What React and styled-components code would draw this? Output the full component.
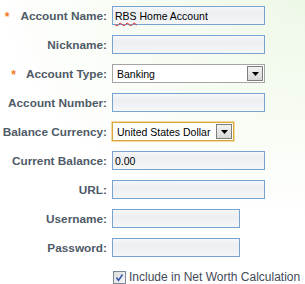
import React from 'react'
import styled, { createGlobalStyle } from 'styled-components'

const GlobalStyle = createGlobalStyle`
  html, body {
    margin: 0;
    padding: 0;
    background: #fff;
  }
  body {
    font-family: "Liberation Sans", Arial, sans-serif;
  }
`

const Page = styled.div`
  width: 305px;
  height: 284px;
  box-sizing: border-box;
  padding-top: 6px;
  background: radial-gradient(ellipse 120% 90% at 100% 0%, #eef8e7 0%, #f7fcf3 45%, #ffffff 85%);
  overflow: hidden;
`

const Form = styled.div`
  display: grid;
  grid-template-columns: 107px 1fr;
  column-gap: 5px;
  row-gap: 10px;
  align-items: center;
`

const Label = styled.div`
  display: flex;
  justify-content: flex-end;
  align-items: center;
  height: 19px;
  font-size: 11.8px;
  font-weight: bold;
  color: #4f5a67;
  white-space: nowrap;
`

const Required = styled.span`
  color: #f07c1c;
  font-size: 12px;
  font-weight: bold;
  margin-right: ${(p) => p.$gap}px;
  position: relative;
  top: 1px;
`

const TextBox = styled.div`
  box-sizing: border-box;
  width: ${(p) => p.$width}px;
  height: 19px;
  border: 1px solid #76a3cf;
  background: linear-gradient(to bottom, #f6f7f9 0%, #eceef2 35%, #f5f6f8 100%);
  font-size: 10.5px;
  color: #000;
  padding: 0 2px;
  display: flex;
  align-items: center;
  white-space: nowrap;
`

const Misspelled = styled.span`
  text-decoration: underline wavy #e02020;
  text-decoration-thickness: 1px;
  text-underline-offset: 2px;
`

const SelectBox = styled.div`
  box-sizing: border-box;
  width: ${(p) => p.$width}px;
  height: 19px;
  border: 1px solid ${(p) => (p.$focused ? '#d9a63e' : '#a5a5a5')};
  box-shadow: ${(p) => (p.$focused ? '0 0 0 1px #f2dc9f' : 'none')};
  background: #fff;
  display: flex;
  align-items: center;
  justify-content: space-between;
  padding: 0 1px 0 4px;
  font-size: 10.5px;
  color: #000;
  white-space: nowrap;
`

const DropButton = styled.div`
  box-sizing: border-box;
  width: 16px;
  height: 15px;
  border: 1px solid #7d7d7d;
  background: linear-gradient(to bottom, #f2f2f2, #d8d8d8);
  display: flex;
  align-items: center;
  justify-content: center;
`

const CheckRow = styled.label`
  grid-column: 2;
  display: flex;
  align-items: center;
  gap: 3px;
  margin-top: 3px;
  font-size: 12px;
  color: #3f4a57;
  white-space: nowrap;
  margin-left: 1px;
`

const CheckBox = styled.span`
  box-sizing: border-box;
  width: 13px;
  height: 13px;
  border: 1px solid #7b8a99;
  background: linear-gradient(to bottom right, #dcdcdc, #f6f6f6);
  display: flex;
  align-items: center;
  justify-content: center;
`

const Arrow = () => (
  <svg width="7" height="4" viewBox="0 0 7 4">
    <path d="M0 0 H7 L3.5 4 Z" fill="#000" />
  </svg>
)

const Tick = () => (
  <svg width="11" height="11" viewBox="0 0 11 11">
    <path d="M2.5 5.5 L4.5 8.5 L8.5 2.5" stroke="#3457b0" strokeWidth="1.5" fill="none" />
  </svg>
)

const Select = ({ value, width, focused }) => (
  <SelectBox $width={width} $focused={focused}>
    <span>{value}</span>
    <DropButton>
      <Arrow />
    </DropButton>
  </SelectBox>
)

const App = () => (
  <Page>
    <GlobalStyle />
    <Form>
      <Label>
        <Required $gap={11}>*</Required>Account Name:
      </Label>
      <TextBox $width={153}>
        <Misspelled>RBS</Misspelled>&nbsp;Home Account
      </TextBox>

      <Label>Nickname:</Label>
      <TextBox $width={153} />

      <Label>
        <Required $gap={10}>*</Required>Account Type:
      </Label>
      <Select value="Banking" width={153} />

      <Label>Account Number:</Label>
      <TextBox $width={153} />

      <Label>Balance Currency:</Label>
      <Select value="United States Dollar" width={122} focused />

      <Label>Current Balance:</Label>
      <TextBox $width={153}>0.00</TextBox>

      <Label>URL:</Label>
      <TextBox $width={153} />

      <Label>Username:</Label>
      <TextBox $width={128} />

      <Label>Password:</Label>
      <TextBox $width={128} />

      <CheckRow>
        <CheckBox>
          <Tick />
        </CheckBox>
        Include in Net Worth Calculation
      </CheckRow>
    </Form>
  </Page>
)

export default App
